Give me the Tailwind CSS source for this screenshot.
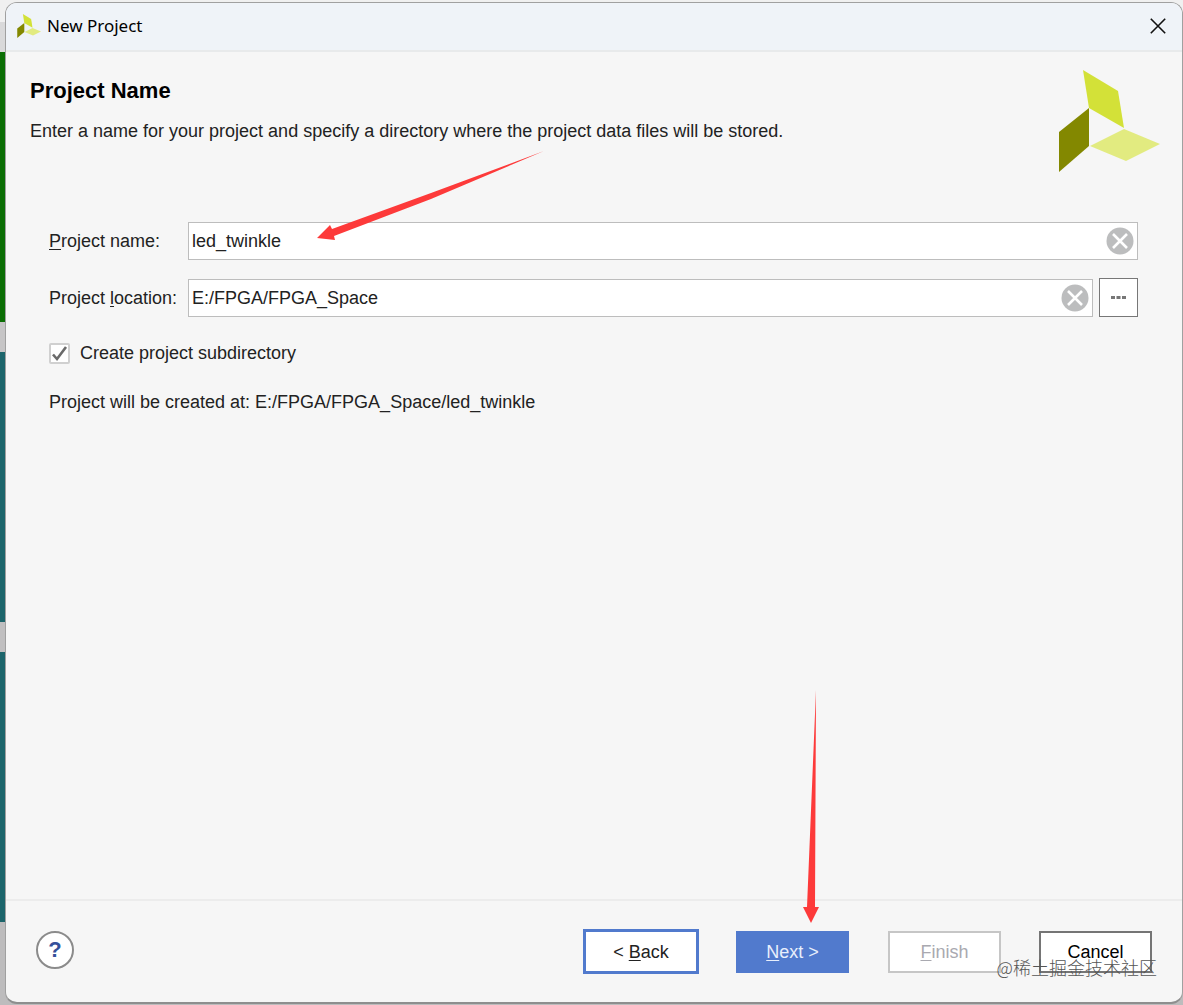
<!DOCTYPE html>
<html lang="en">
<head>
  <meta charset="UTF-8">
  <title>New Project</title>
  <meta name="viewport" content="width=device-width, initial-scale=1">
  <script src="https://cdn.jsdelivr.net/npm/@tailwindcss/browser@4"></script>
</head>

<body class="relative flex min-h-screen bg-[#bdbcbd] pt-[2px] pb-px pl-[5px] font-['Liberation_Sans',sans-serif] text-[18px] leading-6 text-[#222]">

  <!-- Window behind the dialog -->
  <div class="absolute inset-0 -z-10 flex flex-col" aria-hidden="true">
    <div class="h-[22px] bg-[#f0f0f0]"></div>
    <div class="h-[30px] bg-[#d9d9da]"></div>
    <div class="h-[270px] w-8 bg-[#0b6e04]"></div>
    <div class="h-[30px] bg-[#c6c5c6]"></div>
    <div class="h-[270px] w-8 bg-[#1c656b]"></div>
    <div class="h-[30px] bg-[#c0bfc0]"></div>
    <div class="h-[270px] w-8 bg-[#1c656b]"></div>
  </div>

  <div class="relative flex flex-1 flex-col overflow-hidden rounded-xl border border-[#a0a0a0] border-b-2 border-b-[#8e8e8e] bg-[#f6f6f6]">

    <header class="flex h-[49px] items-center border-b-2 border-[#e8eaeb] bg-[#eff3f8] pr-3 pb-[2px] pl-[11px]">
      <svg class="size-6" viewBox="0 0 102 102" aria-hidden="true">
        <path fill="#838800" d="M1 62 31 38v38L1 102z"/>
        <path fill="#d3e138" d="M25 0 60 21l6 37-35-20z"/>
        <path fill="#e2eb80" d="m66 59 36 15-34 17-36-15z"/>
      </svg>
      <h1 class="ml-[6px] flex-1 font-['Noto_Sans',sans-serif] text-[17px] text-black">New Project</h1>
      <button type="button" aria-label="Close" class="p-1">
        <svg class="size-4" viewBox="0 0 16 16" fill="none" stroke="#111" stroke-width="1.6"><path d="m.8.8 14.4 14.4M15.2.8.8 15.2"/></svg>
      </button>
    </header>

    <main class="flex-1 pr-[22px] pl-6">
      <div class="flex justify-between pt-[18px]">
        <div class="pt-[9px]">
          <h2 class="text-[22px] font-bold text-black">Project Name</h2>
          <p class="mt-4">Enter a name for your project and specify a directory where the project data files will be stored.</p>
        </div>
        <svg class="size-[102px] shrink-0" viewBox="0 0 102 102" aria-hidden="true">
          <path fill="#838800" d="M1 62 31 38v38L1 102z"/>
          <path fill="#d3e138" d="M25 0 60 21l6 37-35-20z"/>
          <path fill="#e2eb80" d="m66 59 36 15-34 17-36-15z"/>
        </svg>
      </div>

      <form class="mt-[50px] mr-[22px] ml-[19px]">
        <div class="flex items-center">
          <label for="name" class="w-[139px] shrink-0"><u class="underline-offset-2">P</u>roject name:</label>
          <div class="flex h-[38px] flex-1 items-center border border-[#bdbdbd] bg-white pr-[3px] pl-[3px]">
            <input id="name" type="text" value="led_twinkle" class="min-w-0 flex-1 outline-none">
            <button type="button" aria-label="Clear name">
              <svg class="size-7" viewBox="0 0 28 28"><circle cx="14" cy="14" r="13.5" fill="#bcbdbe"/><path d="m7 7 14 14M21 7 7 21" stroke="#fff" stroke-width="2.6"/></svg>
            </button>
          </div>
        </div>
        <div class="mt-[18px] flex items-center">
          <label for="location" class="w-[139px] shrink-0">Project <u class="underline-offset-2">l</u>ocation:</label>
          <div class="flex h-[38px] flex-1 items-center border border-[#bdbdbd] bg-white pr-[3px] pl-[3px]">
            <input id="location" type="text" value="E:/FPGA/FPGA_Space" class="min-w-0 flex-1 outline-none">
            <button type="button" aria-label="Clear location">
              <svg class="size-7" viewBox="0 0 28 28"><circle cx="14" cy="14" r="13.5" fill="#bcbdbe"/><path d="m7 7 14 14M21 7 7 21" stroke="#fff" stroke-width="2.6"/></svg>
            </button>
          </div>
          <button type="button" aria-label="Browse" class="ml-[6px] flex size-[39px] items-center justify-center border border-[#777] bg-white">
            <svg class="h-[3px] w-[15px]" viewBox="0 0 15 3" fill="#777"><path d="M0 0h4v3H0zM5.500 0h4v3h-4zM11 0h4v3h-4z"/></svg>
          </button>
        </div>
        <label class="mt-6 flex items-center gap-[10px]">
          <span class="relative size-[21px]">
            <input type="checkbox" checked class="block size-[21px] appearance-none rounded-xs border-2 border-[#d0d0d0] bg-white">
            <svg class="pointer-events-none absolute inset-0" viewBox="0 0 21 21" fill="none" stroke="#6a6a6a" stroke-width="2.6"><path d="m4 11.500 4 4.500 9-12"/></svg>
          </span>
          Create project subdirectory
        </label>
        <p class="mt-[25px]">Project will be created at: E:/FPGA/FPGA_Space/led_twinkle</p>
      </form>
    </main>

    <footer class="flex h-[103px] items-center border-t-2 border-[#ececec] px-[30px]">
      <div class="mr-auto pb-1">
        <button type="button" aria-label="Help" class="block size-[38px] rounded-full border-2 border-[#8b8b8b] bg-white text-[22px] font-bold text-[#34509a]">?</button>
      </div>
      <button type="button" class="mr-[37px] h-[45px] w-[116px] border-3 border-[#517acd] bg-white">&lt; <u class="underline-offset-2">B</u>ack</button>
      <button type="button" class="mr-[39px] h-[42px] w-[113px] bg-[#517acd] text-[#e8effc]"><u class="underline-offset-2">N</u>ext &gt;</button>
      <button type="button" disabled class="mr-[38px] h-[42px] w-[113px] border-2 border-[#c6c6c6] bg-white text-[#a9a9b0]"><u class="underline-offset-2">F</u>inish</button>
      <button type="button" class="h-[42px] w-[113px] border-2 border-[#757575] bg-white text-black">Cancel</button>
    </footer>

    <!-- Annotations over the dialog -->
    <svg class="pointer-events-none absolute top-[148px] left-[311px] h-[90px] w-[228px]" viewBox="0 0 228 90" fill="#fd3a3a" aria-hidden="true">
      <path d="M0 87 13 74l2 4L114 42 227 0 114 48 17 85l1 4z"/>
    </svg>
    <svg class="pointer-events-none absolute top-[687px] left-[797px] h-[233px] w-4" viewBox="0 0 16 233" fill="#fd3a3a" aria-hidden="true">
      <path d="M13 0 4 217H0l8 16 8-16h-4z"/>
    </svg>
    <p class="absolute right-[25px] bottom-[23px] font-['Noto_Sans_CJK_SC',sans-serif] text-[18px] font-light text-[#555]">@稀土掘金技术社区</p>
  </div>
</body>
</html>
